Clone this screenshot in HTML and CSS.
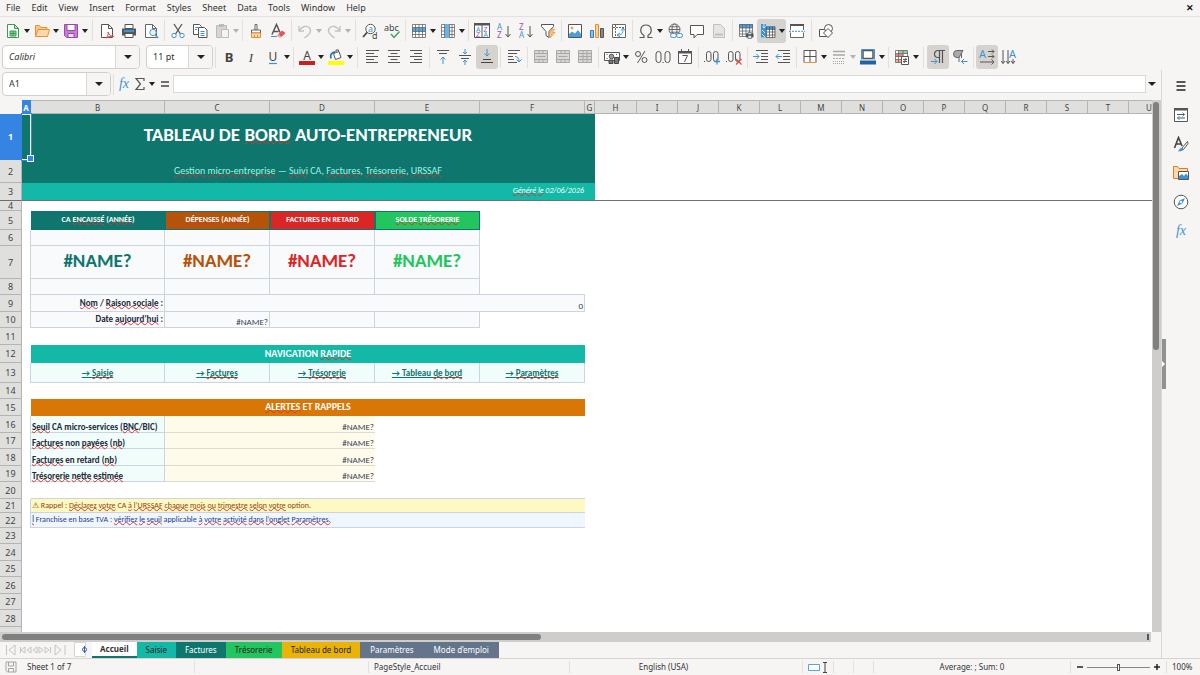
FILE: index.html
```html
<!DOCTYPE html>
<html lang="en">
<head>
<meta charset="utf-8">
<title>Spreadsheet</title>
<link rel="stylesheet" href="styles.css">
</head>
<body>
<svg class="sprite" aria-hidden="true">
  <symbol id="new" viewBox="0 0 16 16"><path d="M2.5 1.5h7l4 4v9h-11z" fill="#fff" stroke="#3a9a50"/><path d="M9.500 1.500v4h4z" fill="#bfe3c6" stroke="#3a9a50"/><path d="M5 8h6v5H5zM5 10.500h6M8 8v5" fill="#8fd09c" stroke="#3a9a50"/></symbol>
  <symbol id="open" viewBox="0 0 16 16"><path d="M1.500 13.500v-11h4l1.500 2h6v2" fill="#f7c98c" stroke="#e8912e"/><path d="M1.500 13.500l2.500-7h11.500l-2 7z" fill="#fbd9a8" stroke="#e8912e"/></symbol>
  <symbol id="save" viewBox="0 0 16 16"><path d="M1.500 1.500h13v13h-11l-2-2z" fill="#c77fd6" stroke="#9a48ad"/><path d="M4 1.500h8v6H4z" fill="#fff" stroke="#9a48ad"/><path d="M5 10.500h6v4H5z" fill="#f2dff6" stroke="#9a48ad"/></symbol>
  <symbol id="pdf" viewBox="0 0 16 16"><path d="M2.500 1.500h7l4 4v9h-11z" fill="#fff" stroke="#555"/><path d="M9.500 1.500v4h4" fill="none" stroke="#555"/><path d="M7 15c2-2 2.500-4 2-6 1 3 3 4.500 6 4.500-3-.5-6 0-8 1.500z" fill="#fff" stroke="#e04848"/></symbol>
  <symbol id="print" viewBox="0 0 16 16"><path d="M4 1.500h8v4H4z" fill="#fff" stroke="#555"/><path d="M1 5.500h14v7H1z" fill="#55575a"/><path d="M3 7h10v2H3z" fill="#3d93d4"/><path d="M4 10.500h8v4H4z" fill="#fff" stroke="#555"/></symbol>
  <symbol id="preview" viewBox="0 0 16 16"><path d="M2.500 1.500h7l4 4v9h-11z" fill="#fff" stroke="#666"/><path d="M9.500 1.500v4h4" fill="none" stroke="#666"/><circle cx="10" cy="9.500" r="3.200" fill="#e6f3fc" stroke="#4a9ad6"/><path d="M12.200 12l3 3" stroke="#4a9ad6" stroke-width="1.500"/></symbol>
  <symbol id="cut" viewBox="0 0 16 16"><path d="M4 1l6.500 10M12 1L5.500 11" stroke="#555" stroke-width="1.300"/><circle cx="4" cy="12.500" r="2.200" fill="#fff" stroke="#3d93d4"/><circle cx="12" cy="12.500" r="2.200" fill="#fff" stroke="#3d93d4"/></symbol>
  <symbol id="copy" viewBox="0 0 16 16"><path d="M1.500 1.500h6l2 2v8h-8z" fill="#fff" stroke="#555"/><path d="M6.500 4.500h6l2.500 2.500v7.500H6.500z" fill="#fff" stroke="#555"/><path d="M8.500 8.500h4M8.500 10.500h4M8.500 12.500h4M3 4.500h3M3 6.500h2" stroke="#3d93d4"/></symbol>
  <symbol id="paste" viewBox="0 0 16 16"><path d="M2.500 2.500h10v12h-10z" fill="#d6d5d3" stroke="#bdbbb8"/><path d="M5 1h5v3H5z" fill="#bdbbb8"/><path d="M7.500 6.500h7v8h-7z" fill="#f4f4f3" stroke="#bdbbb8"/></symbol>
  <symbol id="brush" viewBox="0 0 16 16"><path d="M7 1.500h2v5.500H7z" fill="#fff" stroke="#666"/><path d="M3.500 7h9v3h-9z" fill="#fff" stroke="#666"/><path d="M3.500 10h9v4.500h-9z" fill="#fcd9a8" stroke="#e8912e"/><path d="M6.500 12v2.500M9.500 12v2.500" stroke="#e8912e"/></symbol>
  <symbol id="clear" viewBox="0 0 16 16"><path d="M2 11.500L6.500 1.500l3.500 8M3.500 8.500h5" fill="none" stroke="#555" stroke-width="1.500"/><path d="M1 13.500h6" stroke="#3d93d4"/><path d="M8 11.500l4-4 3.500 2.500-4 4z" fill="#e25555"/><path d="M6.500 12.500l2-1.500 3 3-1.500 1z" fill="#f3a0a0"/></symbol>
  <symbol id="undo" viewBox="0 0 16 16"><path d="M2 3v5h5M2 8c3-5 8-6 10.500-3s.5 6-5 10" fill="none" stroke="#c4c2bf" stroke-width="1.300"/></symbol>
  <symbol id="redo" viewBox="0 0 16 16"><path d="M14 3v5H9M14 8C11 3 6 2 3.500 5s-.5 6 5 10" fill="none" stroke="#c4c2bf" stroke-width="1.300"/></symbol>
  <symbol id="find" viewBox="0 0 16 16"><circle cx="8.500" cy="6" r="4.700" fill="#fff" stroke="#555"/><path d="M5 9.500L1 14" stroke="#444" stroke-width="1.800"/><text x="6" y="9" class="glyph blue g9">a</text><text x="10" y="15.500" class="glyph g9">d</text></symbol>
  <symbol id="spell" viewBox="0 0 16 16"><text x="0" y="8" class="glyph g9">abc</text><path d="M7 11l3 3.500 5.500-6" fill="none" stroke="#35a55a" stroke-width="1.400"/></symbol>
  <symbol id="row" viewBox="0 0 16 16"><path d="M1.500 1.500h13v13h-13z" fill="#fff"/><path d="M1 4.500h14v4H1z" fill="#52aae8"/><path d="M1.500 1.500h13v13h-13zM1.500 4.500h13M1.500 8.500h13M1.500 11.500h13M4.500 1.500v13M8 1.500v13M11.500 1.500v13" fill="none" stroke="#666" stroke-width=".8"/></symbol>
  <symbol id="col" viewBox="0 0 16 16"><path d="M1.500 1.500h13v13h-13z" fill="#fff"/><path d="M1.500 1.500h13v13h-13zM1.500 4.500h13M1.500 8h13M1.500 11.500h13M4.500 1.500v13M9.500 1.500v13M12 1.500v13" fill="none" stroke="#666" stroke-width=".8"/><path d="M5 1h4v14H5z" fill="#65b5ec"/></symbol>
  <symbol id="sort" viewBox="0 0 16 16"><path d="M.5.500h15v14H.5zM8 1v13" fill="#fff" stroke="#555"/><path d="M0 0h16v2.500H0z" fill="#555"/><text x="2" y="8.500" class="glyph blue g7">A</text><text x="2" y="14.200" class="glyph purple g7">Z</text><text x="9.500" y="8.500" class="glyph purple g7">Z</text><text x="9.500" y="14.200" class="glyph blue g7">A</text></symbol>
  <symbol id="az" viewBox="0 0 16 16"><text x="1" y="7" class="glyph blue g8">A</text><text x="1" y="15" class="glyph purple g8">Z</text><path d="M12 3v10.500M9.500 11l2.500 3 2.500-3" fill="none" stroke="#555"/></symbol>
  <symbol id="za" viewBox="0 0 16 16"><text x="1" y="7" class="glyph purple g8">Z</text><text x="1" y="15" class="glyph blue g8">A</text><path d="M12 3v10.500M9.500 11l2.500 3 2.500-3" fill="none" stroke="#555"/></symbol>
  <symbol id="filter" viewBox="0 0 16 16"><path d="M1.500 1.500h12v2L9 8.500v6l-3-2v-4l-4.500-5z" fill="#fff" stroke="#555"/><path d="M12 6l-3 5h2.500L10 15l5-5.500h-2.500L14.500 6z" fill="#fbc784" stroke="#e8912e" stroke-width=".7"/></symbol>
  <symbol id="image" viewBox="0 0 16 16"><path d="M1.500 1.500h13v13h-13z" fill="#fff" stroke="#555"/><path d="M2 14v-3l3-2.500 3 2 3-3.500 3 4v3z" fill="#4a9fdf"/><circle cx="5" cy="5" r="1.500" fill="#f5a742"/></symbol>
  <symbol id="chart" viewBox="0 0 16 16"><path d="M1.500 7.500h3v7h-3z" fill="#8bc4ef" stroke="#2f80c2"/><path d="M6.500 1.500h3v13h-3z" fill="#fbd09a" stroke="#e8912e"/><path d="M11.500 5.500h3v9h-3z" fill="#888" stroke="#555"/></symbol>
  <symbol id="pivot" viewBox="0 0 16 16"><path d="M1.500 1.500h13v13h-13z" fill="#fff" stroke="#666"/><path d="M2 4.500h12M4.500 2v12" stroke="#666" stroke-dasharray="2 1"/><path d="M7 12c4 0 5-2 5-6M10 7.500L12 5l2 2.500M9 10l-3 2 3 2" fill="none" stroke="#3d93d4"/></symbol>
  <symbol id="omega" viewBox="0 0 16 16"><path d="M1.500 14.500h4.500v-2C1 9.500 2 2 8 2s7 7.500 2 10.500v2h4.500" fill="none" stroke="#555" stroke-width="1.200"/></symbol>
  <symbol id="link" viewBox="0 0 16 16"><circle cx="7.500" cy="6.500" r="5.500" fill="#fff" stroke="#666"/><ellipse cx="7.500" cy="6.500" rx="2.500" ry="5.500" fill="none" stroke="#666"/><path d="M2 6.500h11M3 3.800h9M3 9.200h9" stroke="#666"/><rect x="3.500" y="10.500" width="6" height="4" rx="2" fill="#f5f4f2" stroke="#3d93d4"/><rect x="9.500" y="10.500" width="6" height="4" rx="2" fill="#f5f4f2" stroke="#3d93d4"/></symbol>
  <symbol id="comment" viewBox="0 0 16 16"><path d="M1.500 2.500h13v9H8l-3 3.500v-3.500H1.500z" fill="#fff" stroke="#555"/></symbol>
  <symbol id="page" viewBox="0 0 16 16"><path d="M2.500 1.500h7l4 4v9h-11z" fill="#e6e5e3" stroke="#c2c0bd"/><path d="M4 10.500h8v2H4z" fill="#c2c0bd"/></symbol>
  <symbol id="area" viewBox="0 0 16 16"><path d="M1.500 1.500h13v12h-13z" fill="#fff"/><path d="M1 1h14v4H1z" fill="#4a9fdf"/><path d="M1.500 1.500h13v12h-13zM1.500 5h13M1.500 8h13M1.500 11h13M4.500 2v11M8 2v11M11.500 2v11" fill="none" stroke="#666" stroke-width=".8"/><path d="M8 10.500h7.500v4H8z" fill="#555"/><path d="M10 9.500h3.500v2H10zM10 12.500h3.500v3H10z" fill="#cfe6f8" stroke="#555" stroke-width=".6"/></symbol>
  <symbol id="freeze" viewBox="0 0 16 16"><path d="M1.500 3.500h13v11h-13z" fill="#fff"/><path d="M1 1h5v13.500H1zM1 3h14v3H1z" fill="#3d93d4"/><path d="M6 6.500h9M6 9h9M6 12h9M6 14.500h9M6.500 3.500v11M9.500 3.500v11M12.500 3.500v11M15 3.500v11" stroke="#555" stroke-width=".8"/><path d="M2 7l3 3M2 11l3 3M4 0v5M2.500 3.500L4 5l1.500-1.500" stroke="#fff" stroke-width=".8" fill="none"/></symbol>
  <symbol id="split" viewBox="0 0 16 16"><path d="M1.500 1.500h13v13h-13z" fill="#fff"/><path d="M1.500 7V1.500h13V7M1.500 9.500v5h13v-5" fill="none" stroke="#666"/><path d="M1 1h14v2H1z" fill="#555"/><path d="M0 8.300h16" stroke="#3d93d4" stroke-dasharray="2 1"/></symbol>
  <symbol id="shapes" viewBox="0 0 16 16"><path d="M1.500 6.500h7v7h-7z" fill="#fff" stroke="#555"/><circle cx="10.500" cy="5.500" r="4" fill="#fff" stroke="#555"/><path d="M10 5.500l4.500 4.500-4.500 4.500L5.500 10z" fill="#fff" stroke="#555"/></symbol>
  <symbol id="bold" viewBox="0 0 16 16"><text x="8" y="12.500" text-anchor="middle" class="glyph g13 heavy">B</text></symbol>
  <symbol id="italic" viewBox="0 0 16 16"><text x="8" y="12.500" text-anchor="middle" class="glyph g13 serif-italic">I</text></symbol>
  <symbol id="underline" viewBox="0 0 16 16"><text x="8" y="11.500" text-anchor="middle" class="glyph g12">U</text><path d="M4 14.500h8" stroke="#3d93d4" stroke-width="1.200"/></symbol>
  <symbol id="fontcolor" viewBox="0 0 16 16"><text x="8" y="10.500" text-anchor="middle" class="glyph g12">A</text><path d="M0 12h16v4H0z" fill="#c9211e"/></symbol>
  <symbol id="fill" viewBox="0 0 16 16"><path d="M5.500 4.500l5.500-2 2 6-5.500 2z" fill="#fff" stroke="#555"/><path d="M8 3V1h2.500v2" fill="none" stroke="#555"/><path d="M3 9.500c-1-3 0-6 4-6.500" fill="none" stroke="#2a75b5" stroke-width="1.800"/><path d="M0 12h16v4H0z" fill="#ffff00"/></symbol>
  <symbol id="left" viewBox="0 0 16 16"><path d="M2 1.500h13M2 4.500h8M2 7.500h12M2 10.500h8M2 13.500h12" stroke="#555"/></symbol>
  <symbol id="center" viewBox="0 0 16 16"><path d="M2 1.500h12M4.500 4.500h7M2 7.500h12M4.500 10.500h7M2 13.500h12" stroke="#555"/></symbol>
  <symbol id="right" viewBox="0 0 16 16"><path d="M2 1.500h12M6 4.500h8M2 7.500h12M6 10.500h8M2 13.500h12" stroke="#555"/></symbol>
  <symbol id="top" viewBox="0 0 16 16"><path d="M2 1.500h12M4 4.500h8" stroke="#555"/><path d="M8 15V8M5.500 10.500L8 8l2.500 2.500" fill="none" stroke="#3d93d4"/></symbol>
  <symbol id="middle" viewBox="0 0 16 16"><path d="M2 6.500h12M4 9.500h8" stroke="#555"/><path d="M8 0v5M6 3l2 2 2-2M8 16v-5M6 13l2-2 2 2" fill="none" stroke="#3d93d4"/></symbol>
  <symbol id="bottom" viewBox="0 0 16 16"><path d="M4 10.500h8M2 13.500h12" stroke="#444"/><path d="M8 0v7M5.500 4.500L8 7l2.500-2.500" fill="none" stroke="#3d93d4"/></symbol>
  <symbol id="wrap" viewBox="0 0 16 16"><path d="M2 1.500h12M2 4.500h9M2 7.500h5M2 10.500h6M2 13.500h9" stroke="#555"/><path d="M9 7.500c3 0 4 2 4 5M10.500 10.500l2.500 2.500 2.500-2.500" fill="none" stroke="#3d93d4"/></symbol>
  <symbol id="merge" viewBox="0 0 16 16"><path d="M1.500 1.500h13v12h-13z" fill="#d8d7d5" stroke="#aaa8a5"/><path d="M1.500 4.500h13M1.500 10.500h13M6 1.500v3M10 1.500v3M6 10.500v3M10 10.500v3M3.500 7.500h9" stroke="#aaa8a5"/></symbol>
  <symbol id="unmerge" viewBox="0 0 16 16"><path d="M1.500 1.500h13v12h-13z" fill="#d8d7d5" stroke="#aaa8a5"/><path d="M1.500 4.500h13M1.500 7.500h13M1.500 10.500h13M6 1.500v12M10 1.500v12" stroke="#aaa8a5"/></symbol>
  <symbol id="currency" viewBox="0 0 16 16"><path d="M.5 3.500h15v8H.5z" fill="#fff" stroke="#555"/><circle cx="7.500" cy="7.500" r="2.300" fill="#999" stroke="#555"/><path d="M2.500 5.500h1M12 5.500h1M2.500 9.500h1" stroke="#555"/><path d="M5 11h4v3.500H5zM10.500 8.500h4v6h-4z" fill="#777" stroke="#444"/></symbol>
  <symbol id="percent" viewBox="0 0 16 16"><circle cx="5" cy="5" r="2.500" fill="none" stroke="#555"/><circle cx="11.500" cy="11" r="2.500" fill="none" stroke="#555"/><path d="M12 2L4.500 14" stroke="#555"/></symbol>
  <symbol id="number" viewBox="0 0 16 16"><rect x="1" y="2.500" width="5" height="11" rx="2.500" fill="none" stroke="#555"/><rect x="10" y="2.500" width="5" height="11" rx="2.500" fill="none" stroke="#555"/><path d="M7.500 13.500h1.200" stroke="#555"/></symbol>
  <symbol id="date" viewBox="0 0 16 16"><path d="M1.500 2.500h13v12h-13z" fill="#fff" stroke="#555"/><path d="M1 2h14v2.500H1z" fill="#555"/><path d="M4.500 0v3M11.500 0v3" stroke="#555"/><path d="M5.500 6.500h5L7.500 13" fill="none" stroke="#555"/></symbol>
  <symbol id="adddec" viewBox="0 0 16 16"><rect x="2.500" y="2.500" width="4.500" height="10" rx="2.200" fill="none" stroke="#555"/><rect x="9.500" y="2.500" width="4.500" height="10" rx="2.200" fill="none" stroke="#555"/><path d="M0 12.500h1" stroke="#555"/><path d="M10 12.500h6M13 9.500v6" stroke="#3d93d4" stroke-width="1.300"/></symbol>
  <symbol id="deldec" viewBox="0 0 16 16"><rect x="2.500" y="2.500" width="4.500" height="10" rx="2.200" fill="none" stroke="#555"/><rect x="9.500" y="2.500" width="4.500" height="10" rx="2.200" fill="none" stroke="#555"/><path d="M0 12.500h1" stroke="#555"/><path d="M10 10l5.500 5.500M15.500 10L10 15.500" stroke="#e04848" stroke-width="1.200"/></symbol>
  <symbol id="indent" viewBox="0 0 16 16"><path d="M3 1.500h12M8 4.500h7M8 7.500h7M8 10.500h7M3 13.500h12" stroke="#555"/><path d="M0 7.500h6M3.500 5L6 7.500 3.500 10" fill="none" stroke="#3d93d4"/></symbol>
  <symbol id="outdent" viewBox="0 0 16 16"><path d="M3 1.500h12M8 4.500h7M8 7.500h7M8 10.500h7M3 13.500h12" stroke="#555"/><path d="M7 7.500H1M3.500 5L1 7.500 3.500 10" fill="none" stroke="#3d93d4"/></symbol>
  <symbol id="borders" viewBox="0 0 16 16"><path d="M2 1.500h12v12H2z" fill="#fff" stroke="#555"/><path d="M2 7.500h12M8 1.500v12" stroke="#555"/><path d="M2 13.500h12" stroke="#e8912e"/></symbol>
  <symbol id="bstyle" viewBox="0 0 16 16"><path d="M2 2.500h12M2 6h12" stroke="#aaa8a5" stroke-width="1.500"/><path d="M2 9.500h12" stroke="#aaa8a5" stroke-dasharray="2 1"/><path d="M2 12.500h12M2 14.500h12" stroke="#aaa8a5" stroke-dasharray="1 1"/></symbol>
  <symbol id="bcolor" viewBox="0 0 16 16"><path d="M3 1.500h10v8H3z" fill="#fff" stroke="#555" stroke-width="1.500"/><path d="M1.500 10.500v-10h13v10" fill="none" stroke="#3d93d4"/><path d="M0 11.500h16v4H0z" fill="#1f62a8"/></symbol>
  <symbol id="condf" viewBox="0 0 16 16"><path d="M1.500 1.500h12v12h-12z" fill="#fff"/><path d="M5 1.500h8.500v3H5z" fill="#8fd09c"/><path d="M1.500 5h8v3h-8z" fill="#ee8585"/><path d="M1.500 10.500h6v3h-6z" fill="#f3b07c"/><path d="M1.500 1.500h12v12h-12zM1.500 4.500h12M1.500 7.500h12M1.500 10.500h12M4.500 1.500v12M9 1.500v12" fill="none" stroke="#666" stroke-width=".8"/><path d="M7.500 7.500h7v8h-7z" fill="#fff" stroke="#555"/><path d="M9 10.500h4M9 12.500h4M12 9l-2 5" stroke="#555"/></symbol>
  <symbol id="ltr" viewBox="0 0 16 16"><path d="M9.500 14V1.500M12.500 14V1.500M15 1.500H8a3.500 3.500 0 0 0 0 7h1.500" fill="none" stroke="#555" stroke-width="1.200"/><path d="M1 12.500h6M4.500 10L7 12.500 4.500 15" fill="none" stroke="#3d93d4"/></symbol>
  <symbol id="rtl" viewBox="0 0 16 16"><path d="M7 13V1.500M9.500 9V1.500" stroke="#666"/><path d="M11 1.500H5a3.500 3.500 0 0 0 0 7h2z" fill="#aaa" stroke="#666"/><path d="M15.500 12.500h-6M12 10l-2.500 2.500L12 15" fill="none" stroke="#3d93d4"/></symbol>
  <symbol id="horiz" viewBox="0 0 16 16"><text x="0" y="9" class="glyph blue g11">A</text><path d="M9 2.500h6M9 7.500h6M1 13h14M13 .500l2 2-2 2M13 5.500l2 2-2 2M12.500 10.500L15 13l-2.500 2.500" fill="none" stroke="#555"/></symbol>
  <symbol id="vert" viewBox="0 0 16 16"><text x="8" y="9" class="glyph blue g11">A</text><path d="M2 1v13.500M7 1v13.500M12 10v4.500M0 12l2 2.500L4 12M5 12l2 2.500L9 12M10 12l2 2.500 2-2.500" fill="none" stroke="#555"/></symbol>
  <symbol id="fx" viewBox="0 0 16 16"><text x="8" y="12" text-anchor="middle" class="glyph blue g14 serif-italic">fx</text></symbol>
  <symbol id="sigma" viewBox="0 0 16 16"><path d="M12 5V2.500H4L8.500 8 4 13.500h8V11" fill="none" stroke="#555" stroke-width="1.200"/></symbol>
  <symbol id="equals" viewBox="0 0 16 16"><path d="M4 6h8M4 10h8" stroke="#444" stroke-width="1.600"/></symbol>
  <symbol id="menu" viewBox="0 0 16 16"><path d="M3.500 4h9M3.500 8h9M3.500 12h9" stroke="#222" stroke-width="1.300"/></symbol>
  <symbol id="props" viewBox="0 0 16 16"><path d="M1.500 1.500h13v13h-13z" fill="#fff" stroke="#555"/><path d="M1 1h14v2.500H1z" fill="#555"/><path d="M4 7.500h8M4 11h8" stroke="#555"/><path d="M9.500 5.500l2 2-2 2M6.500 9l-2 2 2 2" fill="none" stroke="#3d93d4"/></symbol>
  <symbol id="styles" viewBox="0 0 16 16"><path d="M1.500 12L5.500 1.500 9 10M3 8h5" fill="none" stroke="#444" stroke-width="1.600"/><path d="M14.500 5.500L9 12l1.500 1.500 4.500-6z" fill="#fff" stroke="#555"/><path d="M5 15.500c1-1 1.500-4 4-3.500s2 3.500-4 3.500z" fill="#3d93d4"/></symbol>
  <symbol id="gallery" viewBox="0 0 16 16"><path d="M.5 13.500v-12h4l1.500 2h8.500v10z" fill="#fbd9a8" stroke="#e07b2e"/><path d="M5.500 6.500h10v8h-10z" fill="#fff" stroke="#555"/><path d="M6 14v-3l3-2 2 2 2-2.500 2 2.500v3z" fill="#3d93d4"/></symbol>
  <symbol id="compass" viewBox="0 0 16 16"><circle cx="8" cy="8" r="6.800" fill="#fff" stroke="#555"/><path d="M12 4l-2.500 5.500L4 12l2.500-5.500z" fill="#3d93d4"/><circle cx="8" cy="8" r="1.300" fill="#fff"/></symbol>
</svg>

<div class="app">
  <nav class="menubar">
    <button>File</button><button>Edit</button><button>View</button><button>Insert</button><button>Format</button><button>Styles</button><button>Sheet</button><button>Data</button><button>Tools</button><button>Window</button><button>Help</button>
    <button class="close" aria-label="Close">✕</button>
  </nav>

  <div class="toolbar standard">
    <button class="tb dd" aria-label="New"><svg><use href="#new"/></svg></button>
    <button class="tb dd" aria-label="Open"><svg><use href="#open"/></svg></button>
    <button class="tb dd" aria-label="Save"><svg><use href="#save"/></svg></button>
    <i class="sep wide"></i>
    <button class="tb" aria-label="Export as PDF"><svg><use href="#pdf"/></svg></button>
    <button class="tb" aria-label="Print"><svg><use href="#print"/></svg></button>
    <button class="tb" aria-label="Print preview"><svg><use href="#preview"/></svg></button>
    <i class="sep"></i>
    <button class="tb" aria-label="Cut"><svg><use href="#cut"/></svg></button>
    <button class="tb" aria-label="Copy"><svg><use href="#copy"/></svg></button>
    <button class="tb dd off" aria-label="Paste"><svg><use href="#paste"/></svg></button>
    <i class="sep"></i>
    <button class="tb" aria-label="Clone formatting"><svg><use href="#brush"/></svg></button>
    <button class="tb" aria-label="Clear formatting"><svg><use href="#clear"/></svg></button>
    <i class="sep"></i>
    <button class="tb dd off" aria-label="Undo"><svg><use href="#undo"/></svg></button>
    <button class="tb dd off" aria-label="Redo"><svg><use href="#redo"/></svg></button>
    <i class="sep wide"></i>
    <button class="tb" aria-label="Find and replace"><svg><use href="#find"/></svg></button>
    <button class="tb" aria-label="Spelling"><svg><use href="#spell"/></svg></button>
    <i class="sep"></i>
    <button class="tb dd" aria-label="Row"><svg><use href="#row"/></svg></button>
    <button class="tb dd" aria-label="Column"><svg><use href="#col"/></svg></button>
    <i class="sep"></i>
    <button class="tb" aria-label="Sort"><svg><use href="#sort"/></svg></button>
    <button class="tb" aria-label="Sort ascending"><svg><use href="#az"/></svg></button>
    <button class="tb" aria-label="Sort descending"><svg><use href="#za"/></svg></button>
    <button class="tb" aria-label="AutoFilter"><svg><use href="#filter"/></svg></button>
    <i class="sep"></i>
    <button class="tb" aria-label="Image"><svg><use href="#image"/></svg></button>
    <button class="tb" aria-label="Chart"><svg><use href="#chart"/></svg></button>
    <button class="tb" aria-label="Pivot table"><svg><use href="#pivot"/></svg></button>
    <i class="sep"></i>
    <button class="tb dd" aria-label="Special character"><svg><use href="#omega"/></svg></button>
    <button class="tb" aria-label="Hyperlink"><svg><use href="#link"/></svg></button>
    <button class="tb" aria-label="Comment"><svg><use href="#comment"/></svg></button>
    <button class="tb" aria-label="Headers and footers"><svg><use href="#page"/></svg></button>
    <i class="sep"></i>
    <button class="tb" aria-label="Print area"><svg><use href="#area"/></svg></button>
    <button class="tb dd on" aria-label="Freeze rows and columns"><svg><use href="#freeze"/></svg></button>
    <button class="tb" aria-label="Split window"><svg><use href="#split"/></svg></button>
    <i class="sep wide"></i>
    <button class="tb" aria-label="Show draw functions"><svg><use href="#shapes"/></svg></button>
  </div>

  <div class="toolbar formatting">
    <div class="combo font"><input aria-label="Font name" value="Calibri"><button aria-label="Font list"></button></div>
    <div class="combo size"><input aria-label="Font size" value="11 pt"><button aria-label="Size list"></button></div>
    <i class="sep"></i>
    <button class="tb" aria-label="Bold"><svg><use href="#bold"/></svg></button>
    <button class="tb" aria-label="Italic"><svg><use href="#italic"/></svg></button>
    <button class="tb dd" aria-label="Underline"><svg><use href="#underline"/></svg></button>
    <i class="sep"></i>
    <button class="tb dd" aria-label="Font color"><svg><use href="#fontcolor"/></svg></button>
    <button class="tb dd" aria-label="Background color"><svg><use href="#fill"/></svg></button>
    <i class="sep wide"></i>
    <button class="tb" aria-label="Align left"><svg><use href="#left"/></svg></button>
    <button class="tb" aria-label="Align center"><svg><use href="#center"/></svg></button>
    <button class="tb" aria-label="Align right"><svg><use href="#right"/></svg></button>
    <i class="sep"></i>
    <button class="tb" aria-label="Align top"><svg><use href="#top"/></svg></button>
    <button class="tb" aria-label="Center vertically"><svg><use href="#middle"/></svg></button>
    <button class="tb on" aria-label="Align bottom"><svg><use href="#bottom"/></svg></button>
    <i class="sep"></i>
    <button class="tb" aria-label="Wrap text"><svg><use href="#wrap"/></svg></button>
    <i class="sep"></i>
    <button class="tb" aria-label="Merge and center"><svg><use href="#merge"/></svg></button>
    <button class="tb" aria-label="Merge cells"><svg><use href="#merge"/></svg></button>
    <button class="tb" aria-label="Unmerge cells"><svg><use href="#unmerge"/></svg></button>
    <i class="sep"></i>
    <button class="tb dd" aria-label="Currency"><svg><use href="#currency"/></svg></button>
    <button class="tb" aria-label="Percent"><svg><use href="#percent"/></svg></button>
    <button class="tb" aria-label="Number"><svg><use href="#number"/></svg></button>
    <button class="tb" aria-label="Date"><svg><use href="#date"/></svg></button>
    <i class="sep"></i>
    <button class="tb" aria-label="Add decimal place"><svg><use href="#adddec"/></svg></button>
    <button class="tb" aria-label="Delete decimal place"><svg><use href="#deldec"/></svg></button>
    <i class="sep"></i>
    <button class="tb" aria-label="Increase indent"><svg><use href="#indent"/></svg></button>
    <button class="tb" aria-label="Decrease indent"><svg><use href="#outdent"/></svg></button>
    <i class="sep"></i>
    <button class="tb dd" aria-label="Borders"><svg><use href="#borders"/></svg></button>
    <button class="tb dd off" aria-label="Border style"><svg><use href="#bstyle"/></svg></button>
    <button class="tb dd" aria-label="Border color"><svg><use href="#bcolor"/></svg></button>
    <i class="sep"></i>
    <button class="tb dd" aria-label="Conditional formatting"><svg><use href="#condf"/></svg></button>
    <i class="sep wide"></i>
    <button class="tb on" aria-label="Left to right"><svg><use href="#ltr"/></svg></button>
    <button class="tb" aria-label="Right to left"><svg><use href="#rtl"/></svg></button>
    <i class="sep"></i>
    <button class="tb on" aria-label="Horizontal text"><svg><use href="#horiz"/></svg></button>
    <button class="tb" aria-label="Vertical text"><svg><use href="#vert"/></svg></button>
  </div>

  <div class="work">
    <main class="doc">
      <div class="formula">
        <div class="combo name"><input aria-label="Name box" value="A1"><button aria-label="Names"></button></div>
        <i class="sep"></i>
        <button class="fb" aria-label="Function wizard"><svg><use href="#fx"/></svg></button>
        <button class="fb dd" aria-label="Select function"><svg><use href="#sigma"/></svg></button>
        <button class="fb" aria-label="Formula"><svg><use href="#equals"/></svg></button>
        <input class="line" aria-label="Input line">
        <button class="expand" aria-label="Expand formula bar"></button>
      </div>
      <div class="grid">
        <div class="sheet">
          <table>
            <colgroup><col class="c-num"><col class="c-a"><col class="c-b"><col class="c-c" span="4"><col class="c-g"><col class="c-h"><col class="c-i" span="13"></colgroup>
            <thead>
              <tr class="h14"><th></th><th class="cur">A</th><th>B</th><th>C</th><th>D</th><th>E</th><th>F</th><th>G</th><th>H</th><th>I</th><th>J</th><th>K</th><th>L</th><th>M</th><th>N</th><th>O</th><th>P</th><th>Q</th><th>R</th><th>S</th><th>T</th><th>U</th></tr>
            </thead>
            <tbody>
              <tr class="h46"><th class="cur">1</th><td class="teal cursor"></td><td class="teal title" colspan="5">TABLEAU DE <span class="sp">BORD</span> AUTO-ENTREPRENEUR</td><td class="teal"></td><td colspan="14"></td></tr>
              <tr class="h23"><th>2</th><td class="teal"></td><td class="teal subtitle" colspan="5"><span class="sp">Gestion</span> <span class="sp">micro-entreprise</span> — <span class="sp">Suivi</span> CA, <span class="sp">Factures</span>, <span class="sp">Trésorerie</span>, <span class="sp">URSSAF</span></td><td class="teal"></td><td colspan="14"></td></tr>
              <tr class="h18 frozen"><th>3</th><td class="aqua"></td><td class="aqua date" colspan="5"><span class="sp">Généré</span> <span class="sp">le</span> 02/06/2026</td><td class="aqua"></td><td colspan="14"></td></tr>
              <tr class="h10"><th>4</th><td colspan="21"></td></tr>
              <tr class="h19"><th>5</th><td></td><td class="head teal">CA <span class="sp">ENCAISSÉ</span> (<span class="sp">ANNÉE</span>)</td><td class="head rust"><span class="sp">DÉPENSES</span> (<span class="sp">ANNÉE</span>)</td><td class="head red">FACTURES EN RETARD</td><td class="head green"><span class="sp">SOLDE</span> <span class="sp">TRÉSORERIE</span></td><td colspan="16"></td></tr>
              <tr class="h16"><th>6</th><td class="edge"></td><td class="kpi"></td><td class="kpi"></td><td class="kpi"></td><td class="kpi"></td><td colspan="16"></td></tr>
              <tr class="h33"><th>7</th><td class="edge"></td><td class="kpi big t-teal">#NAME?</td><td class="kpi big t-rust">#NAME?</td><td class="kpi big t-red">#NAME?</td><td class="kpi big t-green">#NAME?</td><td colspan="16"></td></tr>
              <tr class="h16"><th>8</th><td class="edge"></td><td class="kpi"></td><td class="kpi"></td><td class="kpi"></td><td class="kpi"></td><td class="under"></td><td colspan="15"></td></tr>
              <tr class="h17"><th>9</th><td class="edge"></td><td class="kpi label r"><span class="sp">Nom</span> / <span class="sp">Raison sociale</span> :</td><td class="kpi val" colspan="4">0</td><td colspan="15"></td></tr>
              <tr class="h16"><th>10</th><td class="edge"></td><td class="kpi label r">Date <span class="sp">aujourd’hui</span> :</td><td class="kpi val">#NAME?</td><td class="kpi"></td><td class="kpi"></td><td colspan="16"></td></tr>
              <tr class="h17"><th>11</th><td colspan="21"></td></tr>
              <tr class="h18"><th>12</th><td></td><td class="bar aqua" colspan="5">NAVIGATION <span class="sp">RAPIDE</span></td><td colspan="15"></td></tr>
              <tr class="h20"><th>13</th><td class="edge"></td><td class="go"><a href="#saisie">→ <span class="sp">Saisie</span></a></td><td class="go"><a href="#factures">→ <span class="sp">Factures</span></a></td><td class="go"><a href="#tresorerie">→ <span class="sp">Trésorerie</span></a></td><td class="go"><a href="#tableau">→ Tableau <span class="sp">de</span> <span class="sp">bord</span></a></td><td class="go"><a href="#parametres">→ <span class="sp">Paramètres</span></a></td><td colspan="15"></td></tr>
              <tr class="h16"><th>14</th><td colspan="21"></td></tr>
              <tr class="h17"><th>15</th><td></td><td class="bar amber" colspan="5"><span class="sp">ALERTES</span> ET RAPPELS</td><td colspan="15"></td></tr>
              <tr class="h17"><th>16</th><td class="edge"></td><td class="mint label"><span class="sp">Seuil</span> CA micro-services (<span class="sp">BNC</span>/BIC)</td><td class="cream val" colspan="2">#NAME?</td><td colspan="17"></td></tr>
              <tr class="h16"><th>17</th><td class="edge"></td><td class="mint label"><span class="sp">Factures</span> non <span class="sp">payées</span> (<span class="sp">nb</span>)</td><td class="cream val" colspan="2">#NAME?</td><td colspan="17"></td></tr>
              <tr class="h17"><th>18</th><td class="edge"></td><td class="mint label"><span class="sp">Factures</span> en retard (<span class="sp">nb</span>)</td><td class="cream val" colspan="2">#NAME?</td><td colspan="17"></td></tr>
              <tr class="h16"><th>19</th><td class="edge"></td><td class="mint label"><span class="sp">Trésorerie</span> <span class="sp">nette</span> <span class="sp">estimée</span></td><td class="cream val" colspan="2">#NAME?</td><td colspan="17"></td></tr>
              <tr class="h17"><th>20</th><td></td><td class="under" colspan="5"></td><td colspan="15"></td></tr>
              <tr class="h14"><th>21</th><td class="edge"></td><td class="note warn" colspan="5">⚠ Rappel : <span class="sp">Déclarez</span> <span class="sp">votre</span> CA <span class="sp">à</span> <span class="sp">l’URSSAF</span> <span class="sp">chaque</span> <span class="sp">mois</span> <span class="sp">ou</span> <span class="sp">trimestre</span> <span class="sp">selon</span> <span class="sp">votre</span> option.</td><td colspan="15"></td></tr>
              <tr class="h15"><th>22</th><td class="edge"></td><td class="note info" colspan="5"><span class="sp">ⅼ</span> Franchise en base TVA : <span class="sp">vérifiez</span> <span class="sp">le</span> <span class="sp">seuil</span> applicable <span class="sp">à</span> <span class="sp">votre</span> <span class="sp">activité</span> <span class="sp">dans</span> <span class="sp">l’onglet</span> <span class="sp">Paramètres.</span></td><td colspan="15"></td></tr>
              <tr class="h16"><th>23</th><td colspan="21"></td></tr>
              <tr class="h17"><th>24</th><td colspan="21"></td></tr>
              <tr class="h16"><th>25</th><td colspan="21"></td></tr>
              <tr class="h17"><th>26</th><td colspan="21"></td></tr>
              <tr class="h16"><th>27</th><td colspan="21"></td></tr>
              <tr class="h17"><th>28</th><td colspan="21"></td></tr>
              <tr class="h17"><th></th><td colspan="21"></td></tr>
            </tbody>
          </table>
        </div>
        <div class="vscroll"><div class="vthumb"></div></div>
      </div>
      <div class="hscroll"><div class="hthumb"></div><div class="grip"></div></div>
      <div class="tabs">
        <svg class="pager" viewBox="0 0 62 14"><path d="M1.500 2v10M10 2L4 7l6 5zM20 4l-4 3 4 3zM15.500 4v6M26 4l-4 3 4 3zM32 4l-4 3 4 3zM34 4l4 3-4 3zM40 4l4 3-4 3zM45.500 4v6M50 2l6 5-6 5zM60 2v10" fill="none" stroke="#c6c4c1"/></svg>
        <button class="add" aria-label="Add sheet"><svg viewBox="0 0 14 16"><path d="M.5.500h11v14H.5z" fill="#fff" stroke="#d8d6d3"/><circle cx="10.500" cy="7.500" r="2" fill="#fff" stroke="#2c62b4"/><path d="M10.500 4v7" stroke="#2c62b4"/></svg></button>
        <button class="tab active">Accueil</button>
        <button class="tab aqua dark">Saisie</button>
        <button class="tab teal">Factures</button>
        <button class="tab green dark">Trésorerie</button>
        <button class="tab gold dark">Tableau de bord</button>
        <button class="tab slate">Paramètres</button>
        <button class="tab slate">Mode d’emploi</button>
      </div>
    </main>
    <aside class="side">
      <button class="handle" aria-label="Hide sidebar"></button>
      <button aria-label="Sidebar settings"><svg><use href="#menu"/></svg></button>
      <button aria-label="Properties"><svg><use href="#props"/></svg></button>
      <button aria-label="Styles"><svg><use href="#styles"/></svg></button>
      <button aria-label="Gallery"><svg><use href="#gallery"/></svg></button>
      <button aria-label="Navigator"><svg><use href="#compass"/></svg></button>
      <button aria-label="Functions"><svg><use href="#fx"/></svg></button>
    </aside>
  </div>

  <footer class="status">
    <div class="plain"><svg class="disk" viewBox="0 0 12 12"><path d="M1 1h10v10H2.500L1 9.500zM3.500 1v4h5V1M3.500 11V7.500h5V11" fill="none" stroke="#a5a3a0"/></svg></div>
    <div>Sheet 1 of 7</div>
    <div></div>
    <div>PageStyle_Accueil</div>
    <div class="mid plain">English (USA)</div>
    <div></div>
    <div class="mode"><svg viewBox="0 0 20 12"><path d="M.5 3.500h11v6H.5z" fill="#fff" stroke="#5aa3d6"/><path d="M15 1.500h4M15 11.500h4M17 1.500v10" stroke="#444"/></svg></div>
    <div></div>
    <div></div>
    <div class="mid">Average: ; Sum: 0</div>
    <div class="zoom"><button aria-label="Zoom out"><svg viewBox="0 0 8 8"><path d="M1 4h6" stroke="#222" stroke-width="1.500"/></svg></button><input type="range" aria-label="Zoom" value="50"><button aria-label="Zoom in"><svg viewBox="0 0 8 8"><path d="M1 4h6M4 1v6" stroke="#222" stroke-width="1.500"/></svg></button></div>
    <div class="plain">100%</div>
  </footer>
</div>
</body>
</html>
```

FILE: styles.css
```css
* { box-sizing: border-box; }
body {
  margin: 0;
  background: #f6f5f4;
  color: #333;
  font: 9px/12px "Noto Sans", sans-serif;
}
button, input { font: inherit; color: inherit; margin: 0; padding: 0; border: 0; background: none; }
.sprite { display: none; }
svg { display: block; }
.glyph { font-family: "Noto Sans", sans-serif; fill: #444; }
.blue { fill: #3d93d4; }
.purple { fill: #a04fb8; }
.g7 { font-size: 7px; }
.g8 { font-size: 8px; }
.g9 { font-size: 9px; }
.g11 { font-size: 11px; }
.g12 { font-size: 12px; }
.g13 { font-size: 13px; }
.g14 { font-size: 14px; }
.heavy { font-weight: 700; }
.serif-italic { font-family: "Liberation Serif", serif; font-style: italic; }

.app { display: flex; flex-direction: column; height: 100vh; overflow: hidden; }

.menubar { display: flex; gap: 1px; height: 17px; padding-left: 1px; border-bottom: 1px solid #e4e2e0; }
.menubar button { padding: 0 5px; }
.menubar .close { margin-left: auto; padding: 0 6px; font-weight: 700; color: #111; }

.toolbar { display: flex; align-items: center; padding-left: 2px; height: 27px; }
.tb { display: flex; align-items: center; width: 22px; height: 24px; padding-left: 3px; border-radius: 3px; flex: none; }
.tb svg, .side svg, .fb svg { width: 16px; height: 16px; flex: none; }
.dd { width: 29px; }
.dd::after, .combo button::after, .expand::after {
  content: "";
  border: 3px solid transparent;
  border-top: 4px solid #222;
  border-bottom: 0;
}
.tb.dd::after { margin-left: 3px; }
.tb.off::after { border-top-color: #b5b3b0; }
.on { background: #d6d3cf; }
.sep { flex: none; width: 1px; height: 21px; margin: 0 2px; background: #e2e0dd; }
.sep.wide { margin: 0 3px; }

.formatting { height: 26px; }
.combo { display: flex; height: 24px; border: 1px solid #d2cfcb; border-radius: 4px; background: #fff; overflow: hidden; flex: none; }
.combo input { flex: 1; min-width: 0; padding-left: 6px; }
.combo button { display: flex; align-items: center; justify-content: center; width: 24px; border-left: 1px solid #dbd8d5; background: #f6f5f4; }
.combo button::after, .expand::after { border-width: 4px 4px 0; }
.combo.font { width: 138px; margin-right: 6px; font-style: italic; }
.combo.size { width: 67px; }
.combo.name { width: 109px; }

.work { display: flex; flex: 1; min-height: 0; }
.doc { display: flex; flex-direction: column; flex: 1; min-width: 0; }
.formula { display: flex; align-items: center; height: 30px; padding: 0 0 2px 2px; }
.fb { display: flex; align-items: center; width: 16px; height: 22px; flex: none; }
.fb.dd { width: 25px; }
.fb.dd::after { margin-left: 1px; }
.line { flex: 1; min-width: 0; height: 18px; border: 1px solid #dbd9d7; background: #fff; }
.expand { display: flex; justify-content: center; width: 15px; padding-right: 3px; }

.grid { display: flex; flex: 1; min-height: 0; }
.sheet { flex: 1; min-width: 0; overflow: hidden; background: #fff; }
table { width: 1170px; table-layout: fixed; border-collapse: separate; border-spacing: 0; color: #334155; font: 9px/11px Carlito, Lato, sans-serif; }
.c-num { width: 22px; }
.c-a { width: 9px; }
.c-b { width: 134px; }
.c-c { width: 105px; }
.c-g { width: 10px; }
.c-h { width: 42px; }
.c-i { width: 41px; }
th { padding: 0; border: solid #b5b4b2; border-width: 0 1px 1px 0; background: #dfdfde; color: #444; font: 9px/9px "Noto Sans", sans-serif; }
thead th { border-top: 1px solid #b5b4b2; font-size: 8px; }
thead th:first-child { background: #f6f5f4; border-color: #f6f5f4; }
th.cur { background: #3584e4; border-color: #3584e4; color: #fff; font-weight: 700; }
td { padding: 0 1px; white-space: nowrap; text-align: center; vertical-align: middle; }
.h10 { height: 10px; }
.h14 { height: 14px; }
.h15 { height: 15px; }
.h16 { height: 16px; }
.h17 { height: 17px; }
.h18 { height: 18px; }
.h19 { height: 19px; }
.h20 { height: 20px; }
.h23 { height: 23px; }
.h33 { height: 33px; }
.h46 { height: 46px; }

.teal { background: #0f766e; color: #fff; }
.aqua { background: #14b8a6; color: #fff; }
.rust { background: #b45309; color: #fff; }
.red { background: #dc2626; color: #fff; }
.green { background: #22c55e; color: #fff; }
.amber { background: #d97706; color: #fff; }
.gold { background: #eab308; }
.slate { background: #64748b; color: #fff; }
.t-teal { color: #0f766e; }
.t-rust { color: #b45309; }
.t-red { color: #dc2626; }
.t-green { color: #22c55e; }

.sp { text-decoration: underline wavy #d8322c 1px; text-underline-offset: -1px; text-decoration-skip-ink: none; }
.cursor { position: relative; border: 1px solid #fff; border-left: 0; outline: 1px solid #3584e4; }
.cursor::after { content: ""; position: absolute; right: -4px; bottom: -3px; width: 5px; height: 5px; background: #3584e4; border: 1px solid #fff; }
.title { font-size: 19px; line-height: 24px; font-weight: 700; padding-bottom: 4px; }
.subtitle { font-size: 10px; color: #99f6e4; padding-bottom: 2px; }
.date { text-align: right; color: #f0fdfa; font-size: 8px; font-style: italic; padding-bottom: 2px; }
.frozen > * { border-bottom: 1px solid #6f6f6f; }
.head { border: 1px solid #0f766e; font-size: 8px; font-weight: 700; padding-bottom: 2px; }
.edge { border-right: 1px solid #cbd5e1; }
.under { border-bottom: 1px solid #cbd5e1; }
.kpi, .go, .mint { border: solid #cbd5e1; border-width: 0 1px 1px 0; }
.kpi { background: #f8fafc; }
.big { font-size: 19px; line-height: 24px; font-weight: 700; padding-bottom: 2px; }
.label { font-weight: 700; text-align: left; color: #1e293b; vertical-align: bottom; }
.r { text-align: right; vertical-align: middle; padding-bottom: 2px; }
.val { text-align: right; vertical-align: bottom; line-height: 10px; }
.bar { font-size: 10px; font-weight: 700; padding-bottom: 2px; }
.go { background: #f0fdfa; font-weight: 700; }
.go a { color: #0f766e; }
.mint { background: #f0fdfa; }
.cream { background: #fffbeb; border-bottom: 1px solid #d9dccf; }
.note { text-align: left; font-size: 8px; line-height: 10px; border-bottom: 1px solid #cbd5e1; padding-bottom: 2px; }
.warn { background: #fef9c3; color: #92400e; }
.info { background: #eff6ff; color: #1e3a8a; }

.vscroll { width: 9px; padding: 2px 1px; background: #cecdcc; }
.vthumb { width: 6px; height: 47%; border-radius: 3px; background: #7f807f; }
.hscroll { display: flex; justify-content: space-between; height: 10px; margin-right: 10px; padding: 2px; background: #cecdcc; }
.hthumb { width: 47%; height: 6px; border-radius: 3px; background: #7f807f; }
.grip { width: 2px; background: #555; }

.tabs { display: flex; height: 16px; font-size: 8px; }
.pager { width: 62px; height: 14px; margin: 1px 7px 0 5px; }
.add { width: 18px; }
.add svg { width: 14px; height: 16px; }
.tab { padding: 0 9px; }
.tab.active { padding: 0 8px; background: #fff; font-weight: 700; border-bottom: 2px solid #0f766e; }
.tab.dark { color: #222; }
.tab.slate { padding: 0 10px; }

.side { position: relative; display: flex; flex-direction: column; align-items: center; gap: 13px; width: 39px; padding-top: 8px; border-left: 1px solid #dad8d5; }
.handle { position: absolute; left: 0; top: 269px; width: 4px; height: 50px; background: #929292; }
.handle::after { content: ""; position: absolute; left: 0; top: 22px; border: 3px solid transparent; border-left-color: #fff; border-right: 0; }

.status { display: grid; grid-template-columns: 22px 173fr 174fr 201fr 187fr 46fr 31px 20px 20px 197fr 96px 33px; align-items: center; height: 17px; border-top: 1px solid #d6d4d1; font-size: 8px; }
.status > div { display: flex; align-items: center; height: 12px; padding: 0 5px; border-right: 1px solid #e2e0dd; white-space: nowrap; }
.status > .plain { border-right: 0; }
.status .mid { justify-content: center; }
.status .disk { width: 12px; height: 12px; }
.mode svg { width: 20px; height: 12px; flex: none; }
.zoom { gap: 3px; }
.zoom button, .zoom svg { width: 8px; height: 8px; }
.zoom input { flex: 1; min-width: 0; height: 8px; appearance: none; background: linear-gradient(#888, #888) center / 100% 1px no-repeat; }
.zoom input::-webkit-slider-thumb { appearance: none; width: 3px; height: 7px; border: 1px solid #555; background: #fff; }
```
